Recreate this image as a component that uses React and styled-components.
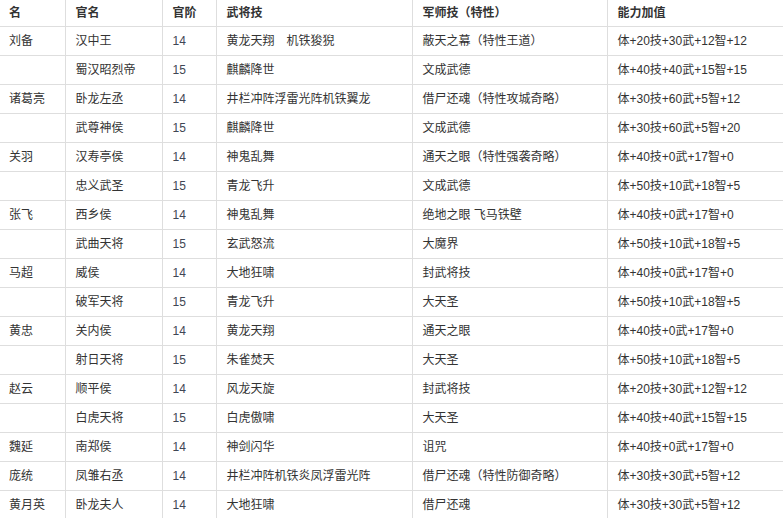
import React from 'react';
import styled, { createGlobalStyle } from 'styled-components';

const GlobalStyle = createGlobalStyle`
  html, body {
    margin: 0;
    padding: 0;
    background: #fff;
  }
  body {
    font-family: "Liberation Sans", "Noto Sans CJK SC", sans-serif;
    color: #333;
  }
`;

const columns = [
  { title: '名', width: 65 },
  { title: '官名', width: 97 },
  { title: '官阶', width: 54 },
  { title: '武将技', width: 196 },
  { title: '军师技（特性）', width: 195 },
  { title: '能力加值', width: 176 },
];

const rows = [
  ['刘备', '汉中王', '14', '黄龙天翔　机铁狻猊', '蔽天之幕（特性王道）', '体+20技+30武+12智+12'],
  ['', '蜀汉昭烈帝', '15', '麒麟降世', '文成武德', '体+40技+40武+15智+15'],
  ['诸葛亮', '卧龙左丞', '14', '井栏冲阵浮雷光阵机铁翼龙', '借尸还魂（特性攻城奇略）', '体+30技+60武+5智+12'],
  ['', '武尊神侯', '15', '麒麟降世', '文成武德', '体+30技+60武+5智+20'],
  ['关羽', '汉寿亭侯', '14', '神鬼乱舞', '通天之眼（特性强袭奇略）', '体+40技+0武+17智+0'],
  ['', '忠义武圣', '15', '青龙飞升', '文成武德', '体+50技+10武+18智+5'],
  ['张飞', '西乡侯', '14', '神鬼乱舞', '绝地之眼 飞马铁壁', '体+40技+0武+17智+0'],
  ['', '武曲天将', '15', '玄武怒流', '大魔界', '体+50技+10武+18智+5'],
  ['马超', '威侯', '14', '大地狂啸', '封武将技', '体+40技+0武+17智+0'],
  ['', '破军天将', '15', '青龙飞升', '大天圣', '体+50技+10武+18智+5'],
  ['黄忠', '关内侯', '14', '黄龙天翔', '通天之眼', '体+40技+0武+17智+0'],
  ['', '射日天将', '15', '朱雀焚天', '大天圣', '体+50技+10武+18智+5'],
  ['赵云', '顺平侯', '14', '风龙天旋', '封武将技', '体+20技+30武+12智+12'],
  ['', '白虎天将', '15', '白虎傲啸', '大天圣', '体+40技+40武+15智+15'],
  ['魏延', '南郑侯', '14', '神剑闪华', '诅咒', '体+40技+0武+17智+0'],
  ['庞统', '凤雏右丞', '14', '井栏冲阵机铁炎凤浮雷光阵', '借尸还魂（特性防御奇略）', '体+30技+30武+5智+12'],
  ['黄月英', '卧龙夫人', '14', '大地狂啸', '借尸还魂', '体+30技+30武+5智+12'],
];

const Table = styled.table`
  width: 783px;
  border-collapse: collapse;
  table-layout: fixed;
  font-size: 12px;
  line-height: 16px;
`;

const HeadCell = styled.th`
  height: 26px;
  padding: 0 10px 0 ${(p) => (p.$first ? '9px' : '10px')};
  text-align: left;
  font-weight: bold;
  color: #333;
  white-space: nowrap;
  vertical-align: middle;
  border-bottom: 1px solid #dedede;
  border-left: ${(p) => (p.$first ? 'none' : '1px solid #dedede')};
`;

const Cell = styled.td`
  height: 28px;
  padding: 0 10px 0 ${(p) => (p.$first ? '9px' : '10px')};
  color: ${(p) => (p.$num ? '#3f4654' : '#333')};
  white-space: nowrap;
  vertical-align: middle;
  border-bottom: 1px solid #dedede;
  border-left: ${(p) => (p.$first ? 'none' : '1px solid #dedede')};
`;

export default function App() {
  return (
    <>
      <GlobalStyle />
      <Table>
        <colgroup>
          {columns.map((c) => (
            <col key={c.title} style={{ width: c.width }} />
          ))}
        </colgroup>
        <thead>
          <tr>
            {columns.map((c, i) => (
              <HeadCell key={c.title} $first={i === 0}>
                {c.title}
              </HeadCell>
            ))}
          </tr>
        </thead>
        <tbody>
          {rows.map((r, ri) => (
            <tr key={ri}>
              {r.map((v, ci) => (
                <Cell key={ci} $first={ci === 0} $num={ci === 2}>
                  {v}
                </Cell>
              ))}
            </tr>
          ))}
        </tbody>
      </Table>
    </>
  );
}
